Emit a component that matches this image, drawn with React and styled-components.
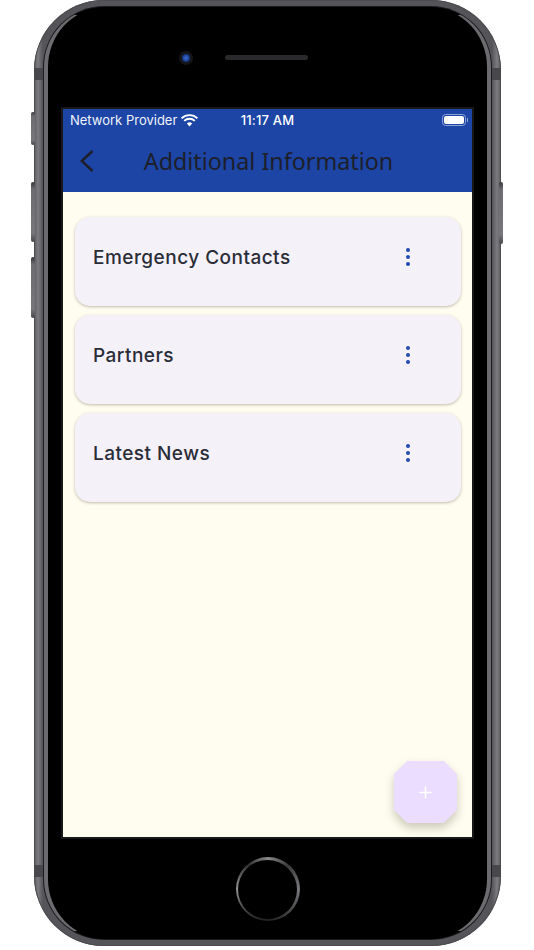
import React from "react";
import styled, { createGlobalStyle } from "styled-components";
import { Plus } from "lucide-react";

const GlobalStyle = createGlobalStyle`
  html, body {
    margin: 0;
    padding: 0;
    background: #fff;
    font-family: "Inter", "Liberation Sans", sans-serif;
  }
`;

const items = ["Emergency Contacts", "Partners", "Latest News"];

function App() {
  return (
    <Page>
      <GlobalStyle />
      <Shell>
        <SideButton $side="left" $top={112} $height={33} />
        <SideButton $side="left" $top={182} $height={60} />
        <SideButton $side="left" $top={257} $height={61} />
        <SideButton $side="right" $top={182} $height={62} />
        <AntennaBand $side="left" $top={68} />
        <AntennaBand $side="right" $top={68} />
        <AntennaBand $side="left" $top={865} />
        <AntennaBand $side="right" $top={865} />

        <Bezel>
          <TopBar>
            <Camera />
            <Speaker />
          </TopBar>

          <Screen>
            <Header>
              <StatusBar>
                <Carrier>
                  Network Provider
                  <svg width="17" height="13" viewBox="0 0 17 13">
                    <path d="M0.6 4.3 A11.4 11.4 0 0 1 16.4 4.3" fill="none" stroke="#fff" strokeWidth="1.9" />
                    <path d="M3.2 6.9 A7.7 7.7 0 0 1 13.8 6.9" fill="none" stroke="#fff" strokeWidth="1.9" />
                    <path d="M5.8 9.5 A4 4 0 0 1 11.2 9.5 L8.5 12.4 Z" fill="#fff" />
                  </svg>
                </Carrier>
                <Clock>11:17 AM</Clock>
                <Battery>
                  <BatteryFill />
                </Battery>
              </StatusBar>
              <AppBar>
                <BackIcon width="16" height="24" viewBox="0 0 16 24">
                  <path d="M13.5 2 L2.8 12 L13.5 22" fill="none" stroke="#1d1f2b" strokeWidth="2.5" />
                </BackIcon>
                <Title>Additional Information</Title>
              </AppBar>
            </Header>

            <Content>
              {items.map((name) => (
                <Card key={name}>
                  <CardTitle>{name}</CardTitle>
                  <Dots>
                    <Dot />
                    <Dot />
                    <Dot />
                  </Dots>
                </Card>
              ))}
            </Content>

            <FabShadow>
              <Fab>
                <Plus size={19} strokeWidth={2} color="#fff" />
              </Fab>
            </FabShadow>
          </Screen>

          <BottomBar>
            <HomeButton />
          </BottomBar>
        </Bezel>
      </Shell>
    </Page>
  );
}

export default App;

const Page = styled.div`
  width: 534px;
  height: 950px;
  padding-left: 34px;
  box-sizing: border-box;
  overflow: hidden;
`;

const Shell = styled.div`
  position: relative;
  width: 467px;
  height: 946px;
  box-sizing: border-box;
  padding: 7px 10px 7px;
  border-radius: 70px;
  background: linear-gradient(90deg, #5a5a5e 0, #7c7c80 4px, #555559 9px, #555559 458px, #7c7c80 463px, #5a5a5e 100%);
  box-shadow: inset 0 0 0 1px #4c4c50;
`;

const SideButton = styled.div`
  position: absolute;
  top: ${(p) => p.$top}px;
  ${(p) => (p.$side === "left" ? "left: -3px;" : "right: -2px;")}
  width: 4px;
  height: ${(p) => p.$height}px;
  border-radius: 2px;
  background: linear-gradient(180deg, #38383b 0, #6c6c71 12%, #77777b 85%, #48484c 100%);
`;

const AntennaBand = styled.div`
  position: absolute;
  top: ${(p) => p.$top}px;
  ${(p) => (p.$side === "left" ? "left: 0;" : "right: 0;")}
  width: 9px;
  height: 12px;
  background: #48484c;
`;

const Bezel = styled.div`
  height: 100%;
  box-sizing: border-box;
  display: flex;
  flex-direction: column;
  align-items: center;
  background: #000;
  border-radius: 60px;
  border-style: solid;
  border-width: 1px 4px;
  border-color: #000 #6c6c70;
  box-shadow: 0 0 0 1px #1c1c1e;
`;

const TopBar = styled.div`
  height: 101px;
  width: 100%;
  flex-shrink: 0;
  display: flex;
  align-items: center;
  justify-content: center;
  gap: 35px;
  padding: 0 45px 0 0;
  box-sizing: border-box;
  & > * {
    margin-top: -2px;
  }
`;

const Camera = styled.div`
  width: 8px;
  height: 8px;
  border-radius: 50%;
  background: radial-gradient(circle, #3f6fd0 0, #1b3f92 55%, #0c1a3c 100%);
  box-shadow: 0 0 0 3px #15161a;
`;

const Speaker = styled.div`
  width: 83px;
  height: 5px;
  border-radius: 3px;
  background: #2a2a2c;
`;

const Screen = styled.div`
  position: relative;
  width: 409px;
  height: 728px;
  flex-shrink: 0;
  display: flex;
  flex-direction: column;
  background: #fffdf0;
  box-shadow: 0 0 0 2px #18181b;
`;

const Header = styled.header`
  background: #1c45a6;
  height: 83px;
  flex-shrink: 0;
  display: flex;
  flex-direction: column;
`;

const StatusBar = styled.div`
  height: 22px;
  padding: 0 6px 0 7px;
  display: grid;
  grid-template-columns: 1fr auto 1fr;
  align-items: center;
  color: #fff;
`;

const Carrier = styled.div`
  display: flex;
  align-items: center;
  gap: 4px;
  font-size: 13px;
  color: #f0f3fa;
  white-space: nowrap;
`;

const Clock = styled.div`
  font-size: 13px;
  font-weight: 500;
  letter-spacing: 0.2px;
  margin-right: 1px;
`;

const Battery = styled.div`
  justify-self: end;
  position: relative;
  width: 24px;
  height: 12px;
  box-sizing: border-box;
  padding: 1px;
  border-radius: 3.5px;
  border: 1px solid #8ea2d4;
  &::after {
    content: "";
    position: absolute;
    right: -3px;
    top: 3px;
    width: 1px;
    height: 4px;
    background: #8ea2d4;
  }
`;

const BatteryFill = styled.div`
  height: 100%;
  border-radius: 2px;
  background: #fff;
`;

const AppBar = styled.div`
  flex: 1;
  position: relative;
  display: flex;
  align-items: center;
  justify-content: center;
  padding: 0 0 2px 2px;
`;

const BackIcon = styled.svg`
  position: absolute;
  left: 16px;
  top: 18px;
`;

const Title = styled.h1`
  margin: 0;
  font-family: "Noto Sans", "Open Sans", sans-serif;
  font-size: 23.3px;
  font-weight: 400;
  color: #1d1f2b;
  white-space: nowrap;
`;

const Content = styled.main`
  padding: 25px 11px 0 12px;
  display: flex;
  flex-direction: column;
  gap: 9px;
`;

const Card = styled.section`
  height: 89px;
  box-sizing: border-box;
  display: flex;
  align-items: flex-start;
  justify-content: space-between;
  padding: 29px 51px 0 18px;
  border-radius: 15px;
  background: #f5f1f9;
  box-shadow: 0 1px 3px rgba(60, 50, 30, 0.32);
`;

const CardTitle = styled.h2`
  margin: 0;
  font-family: "Inter", sans-serif;
  font-size: 19px;
  line-height: 24px;
  font-weight: 550;
  letter-spacing: 0.47px;
  color: #2a2d38;
`;

const Dots = styled.div`
  display: flex;
  flex-direction: column;
  gap: 2.6px;
  padding-top: 2px;
`;

const Dot = styled.span`
  width: 4.2px;
  height: 4.2px;
  border-radius: 50%;
  background: #1f4bb0;
`;

const FabShadow = styled.div`
  position: absolute;
  right: 15px;
  bottom: 14px;
  filter: drop-shadow(0 5px 5px rgba(70, 70, 40, 0.28));
`;

const Fab = styled.button`
  width: 63px;
  height: 62px;
  border: 0;
  padding: 0;
  display: flex;
  align-items: center;
  justify-content: center;
  background: #eaddff;
  clip-path: polygon(21% 0, 79% 0, 100% 21%, 100% 79%, 79% 100%, 21% 100%, 0 79%, 0 21%);
`;

const BottomBar = styled.div`
  flex: 1;
  width: 100%;
  display: flex;
  align-items: center;
  justify-content: center;
  padding-top: 3px;
  box-sizing: border-box;
`;

const HomeButton = styled.div`
  width: 64px;
  height: 64px;
  box-sizing: border-box;
  border-radius: 50%;
  padding: 2.5px;
  background: conic-gradient(#8a8a8c 0deg, #3a3a3c 40deg, #77777c 90deg, #4a4a4d 130deg, #1f1f21 180deg, #3c3c3f 225deg, #949498 270deg, #303032 320deg, #8a8a8c 360deg);
  &::before {
    content: "";
    display: block;
    width: 100%;
    height: 100%;
    border-radius: 50%;
    background: #000;
  }
`;
